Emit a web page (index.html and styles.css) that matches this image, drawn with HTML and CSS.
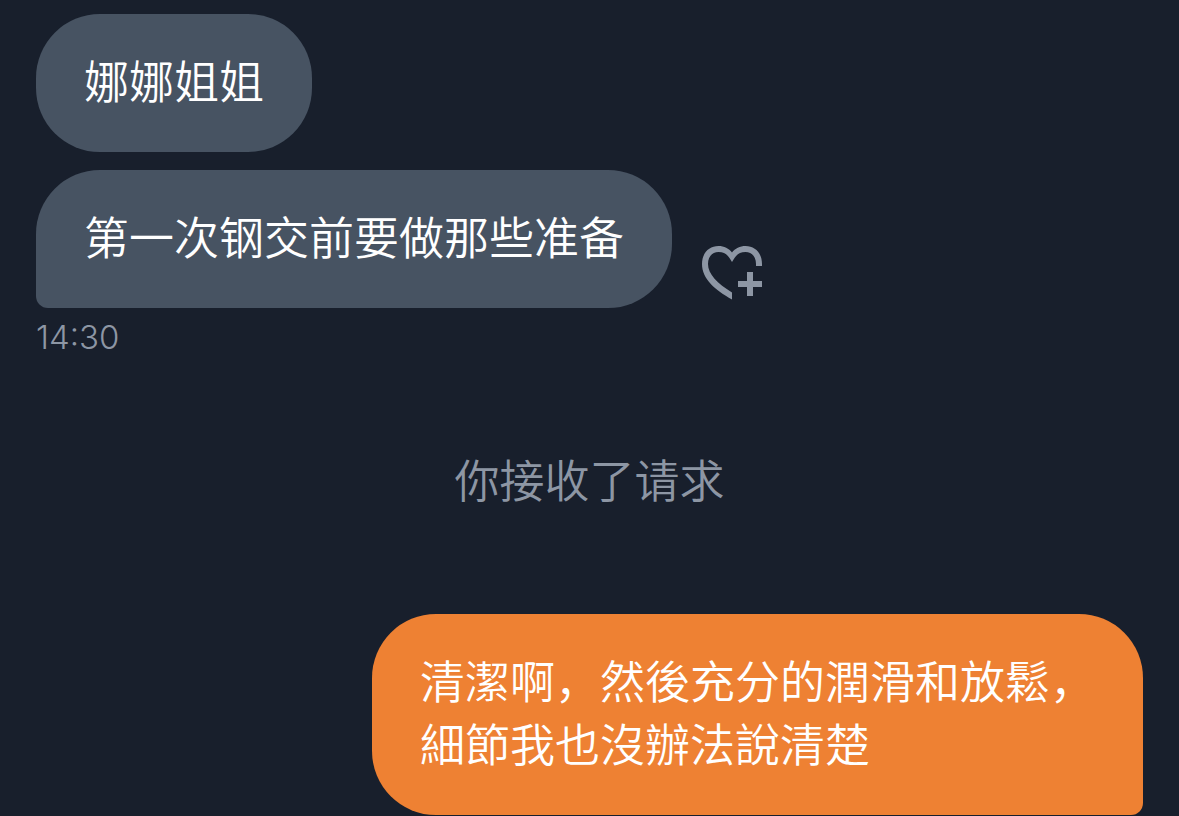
FILE: index.html
```html
<!DOCTYPE html>
<html lang="zh-CN">
<head>
  <meta charset="UTF-8">
  <meta name="viewport" content="width=device-width, initial-scale=1.0">
  <title>私信</title>
  <link rel="stylesheet" href="styles.css">
</head>
<body>
  <main class="chat">
    <div class="row">
      <p class="bubble">娜娜姐姐</p>
    </div>

    <div class="row">
      <p class="bubble bubble-last">第一次钢交前要做那些准备</p>
      <button class="react" type="button" aria-label="添加回应">
        <svg width="60" height="54" viewBox="0 0 60 54" fill="currentColor" aria-hidden="true">
          <path d="M30 53.500C13 44 0 33 0 18C0 7 7 0 16.500 0C22 0 27 2.500 30 6.500C33 2.500 38 0 43.500 0C53 0 60 7 60 18V20H54V18C54 10.500 49.500 6 43.500 6C38 6 35 8.500 32.500 12L30 16L27.500 12C25 8.500 22 6 16.500 6C10.500 6 6 10.500 6 18C6 28 15.500 37.500 30 46.500Z"/>
          <path d="M45 26h6v9h9v6h-9v9h-6v-9h-9v-6h9z"/>
        </svg>
      </button>
    </div>
    <time class="time" datetime="14:30">14:30</time>

    <p class="notice">你接收了请求</p>

    <div class="row row-own">
      <p class="bubble bubble-own">清潔啊，然後充分的潤滑和放鬆，<br>細節我也沒辦法說清楚</p>
    </div>
  </main>
</body>
</html>
```

FILE: styles.css
```css
:root {
  --bg: #181f2c;
  --bubble: #475362;
  --own: #ee8133;
  --muted: #8d96a4;
  --radius: 64px;
}

* {
  box-sizing: border-box;
}

body {
  margin: 0;
  background: var(--bg);
  color: white;
  font-family: "Noto Sans CJK SC", sans-serif;
  font-size: 45px;
  font-weight: 350;
  line-height: 63px;
}

.chat {
  display: flex;
  flex-direction: column;
  padding: 14px 36px 1px;
}

.row {
  display: flex;
  align-items: flex-end;
  gap: 30px;
}

.row + .row {
  margin-top: 18px;
}

.row-own {
  justify-content: flex-end;
}

.bubble {
  margin: 0;
  padding: 34px 48px 41px;
  background: var(--bubble);
  border-radius: var(--radius);
}

.bubble-last {
  border-bottom-left-radius: 12px;
}

.bubble-own {
  background: var(--own);
  border-bottom-right-radius: 12px;
}

.react {
  margin: 0 0 8px;
  padding: 0;
  border: none;
  background: none;
  color: var(--muted);
  cursor: pointer;
}

.react svg {
  display: block;
}

.time {
  margin-top: 9px;
  color: var(--muted);
  font-family: Inter, sans-serif;
  font-size: 33px;
  line-height: 40px;
}

.notice {
  margin: 90px 0 104px;
  color: var(--muted);
  text-align: center;
}
```
